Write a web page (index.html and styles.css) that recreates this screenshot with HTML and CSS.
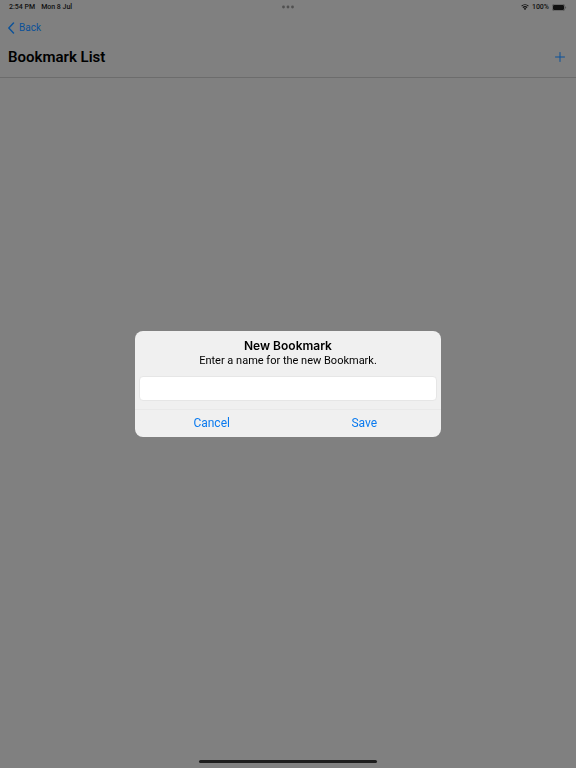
FILE: index.html
```html
<!DOCTYPE html>
<html lang="en">
<head>
  <meta charset="utf-8">
  <meta name="viewport" content="width=device-width, initial-scale=1">
  <title>Bookmark List</title>
  <link rel="stylesheet" href="styles.css">
</head>
<body>
  <div class="screen">
    <div class="status">
      <div class="status-left"><span>2:54 PM</span><span>Mon 8 Jul</span></div>
      <svg class="dots" width="14" height="4" viewBox="0 0 14 4" aria-hidden="true">
        <circle cx="2.5" cy="2" r="1.4"/><circle cx="7" cy="2" r="1.4"/><circle cx="11.5" cy="2" r="1.4"/>
      </svg>
      <div class="status-right">
        <svg width="8" height="6" viewBox="0 0 16 12" aria-hidden="true">
          <path d="M1.200 4.200a9.800 9.800 0 0 1 13.600 0M3.800 7.200a6 6 0 0 1 8.400 0" fill="none" stroke="currentColor" stroke-width="2.200"/>
          <path d="M5.400 9.400a3.800 3.800 0 0 1 5.200 0L8 12z" fill="currentColor"/>
        </svg>
        <span>100%</span>
        <svg width="15" height="7" viewBox="0 0 15 7" aria-hidden="true">
          <rect x="0.25" y="0.25" width="12.5" height="6.5" rx="2" fill="none" stroke="#444" stroke-width="0.5"/>
          <rect x="1" y="1" width="11" height="5" rx="1.2" fill="currentColor"/>
          <path d="M13.4 2.4c1 .3 1 1.900 0 2.200z" fill="#444"/>
        </svg>
      </div>
    </div>
    <header class="header">
      <a class="back" href="#">
        <svg width="7" height="12" viewBox="0 0 7 12" aria-hidden="true">
          <path d="M5.500 1 .8 6l4.700 5" fill="none" stroke="currentColor" stroke-width="1.4" stroke-linecap="round" stroke-linejoin="round"/>
        </svg>
        <span>Back</span>
      </a>
      <div class="title-row">
        <h1>Bookmark List</h1>
        <button class="add" type="button" aria-label="Add bookmark">
          <svg width="10" height="10" viewBox="0 0 10 10" aria-hidden="true">
            <path d="M5 .5v9M.5 5h9" fill="none" stroke="currentColor" stroke-linecap="round"/>
          </svg>
        </button>
      </div>
    </header>
    <main class="content"></main>
    <div class="home-bar"></div>
  </div>
  <div class="overlay">
    <form class="dialog" role="dialog" aria-labelledby="dialog-title">
      <h2 id="dialog-title">New Bookmark</h2>
      <label for="name">Enter a name for the new Bookmark.</label>
      <input id="name" type="text">
      <div class="actions">
        <button type="button">Cancel</button>
        <button type="button">Save</button>
      </div>
    </form>
  </div>
</body>
</html>
```
FILE: styles.css
```css
* {
  box-sizing: border-box;
}

body {
  margin: 0;
  background: #808080;
  color: #000;
  font-family: Roboto, "Liberation Sans", sans-serif;
}

h1,
h2 {
  margin: 0;
  font-weight: 600;
}

button {
  padding: 0;
  border: 0;
  background: none;
  font: inherit;
}

svg {
  display: block;
}

.screen {
  display: flex;
  flex-direction: column;
  min-height: 100vh;
}

.status {
  display: grid;
  grid-template-columns: 1fr auto 1fr;
  align-items: center;
  height: 14px;
  padding: 0 9px;
  color: #101010;
  font-size: 7px;
  font-weight: 500;
  line-height: 14px;
}

.status-left {
  display: flex;
  gap: 6px;
}

.dots {
  fill: #505050;
}

.status-right {
  display: flex;
  align-items: center;
  justify-content: flex-end;
  gap: 3px;
}

.header {
  height: 64px;
  padding: 6px 11px 0 8px;
  border-bottom: 1px solid #6c6c6c;
}

.back {
  display: flex;
  align-items: center;
  gap: 4px;
  width: fit-content;
  height: 16px;
  color: #0b5199;
  font-size: 10px;
  line-height: 16px;
  text-decoration: none;
}

.title-row {
  display: flex;
  align-items: center;
  justify-content: space-between;
  height: 24px;
  margin-top: 9px;
}

h1 {
  font-size: 15px;
  line-height: 24px;
}

.add {
  color: #0b5199;
}

.content {
  flex: 1;
}

.home-bar {
  align-self: center;
  width: 31%;
  height: 3px;
  margin-bottom: 5px;
  border-radius: 2px;
  background: #1c1c1c;
}

.overlay {
  position: fixed;
  inset: 0;
  display: flex;
  align-items: center;
  justify-content: center;
}

.dialog {
  display: flex;
  flex-direction: column;
  width: 53%;
  padding-top: 7px;
  border-radius: 8px;
  background: #f0f0f0;
  overflow: hidden;
  text-align: center;
}

h2 {
  font-family: Inter, sans-serif;
  font-size: 12px;
  line-height: 15px;
}

label {
  font-size: 11px;
  line-height: 16px;
}

input {
  height: 25px;
  margin: 7px 4px 8px;
  padding: 0 6px;
  border: 1px solid #e6e6e6;
  border-radius: 4px;
  outline: 0;
  background: #fff;
  font: inherit;
  font-size: 11px;
}

.actions {
  display: grid;
  grid-template-columns: 1fr 1fr;
  height: 28px;
  border-top: 1px solid #e9e9e9;
  color: #0a7aef;
  font-size: 12px;
}

.actions button {
  padding-bottom: 2px;
  color: inherit;
}
```
